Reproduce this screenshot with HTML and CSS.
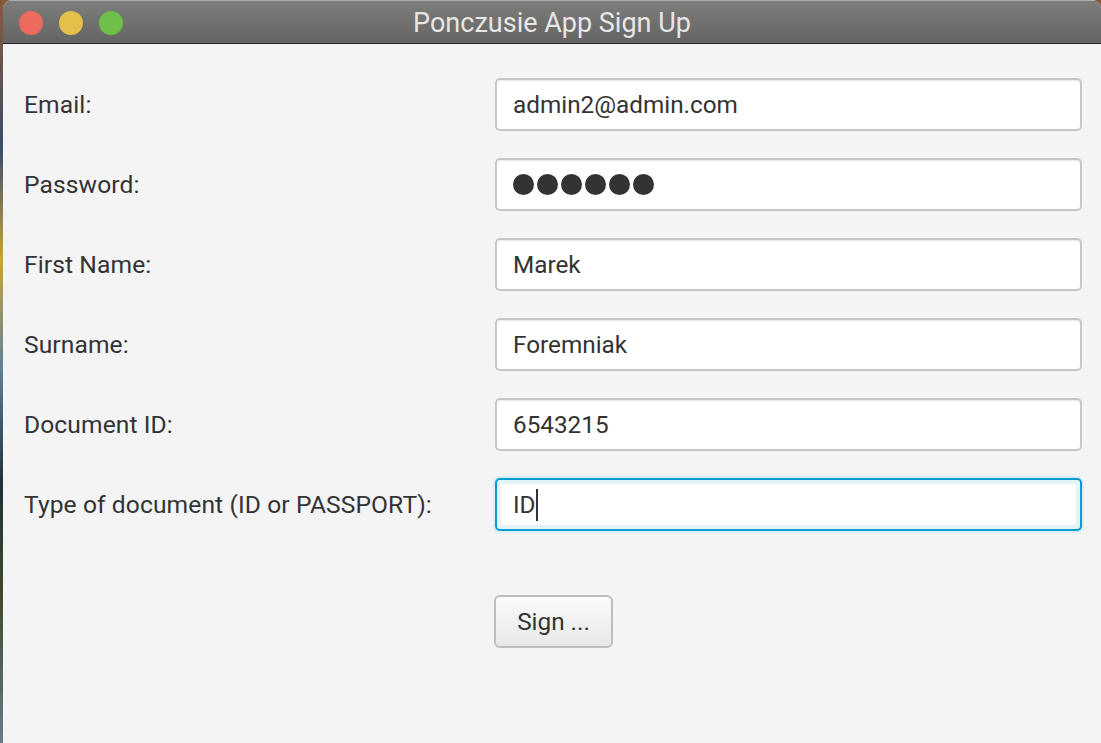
FILE: index.html
```html
<!DOCTYPE html>
<html>
<head>
<meta charset="utf-8">
<link rel="stylesheet" href="styles.css">
</head>
<body>
<div class="desktop">
  <div class="window">
    <div class="titlebar">
      <div class="lights">
        <span class="light red"></span>
        <span class="light yellow"></span>
        <span class="light green"></span>
      </div>
      <div class="title">Ponczusie App Sign Up</div>
    </div>
    <div class="content">
      <div class="form">
        <label class="label">Email:</label>
        <div class="field"><span class="value">admin2@admin.com</span></div>
        <label class="label">Password:</label>
        <div class="field"><span class="dots"><i></i><i></i><i></i><i></i><i></i><i></i></span></div>
        <label class="label">First Name:</label>
        <div class="field"><span class="value">Marek</span></div>
        <label class="label">Surname:</label>
        <div class="field"><span class="value">Foremniak</span></div>
        <label class="label">Document ID:</label>
        <div class="field"><span class="value">6543215</span></div>
        <label class="label">Type of document (ID or PASSPORT):</label>
        <div class="field focused"><span class="value">ID</span><span class="caret"></span></div>
      </div>
      <div class="actions">
        <button class="btn">Sign ...</button>
      </div>
    </div>
  </div>
</div>
</body>
</html>
```
FILE: styles.css
```css
html, body {
  margin: 0;
  padding: 0;
  width: 1101px;
  height: 743px;
  overflow: hidden;
}
.desktop {
  width: 1101px;
  height: 743px;
  background: linear-gradient(180deg, #8a5a3a 0%, #3b4d6a 20%, #c9a43a 35%, #5b7f9a 50%, #20303a 65%, #3d4a2a 80%, #6a7a8a 100%);
  display: flex;
  padding-left: 3px;
  box-sizing: border-box;
}
.window {
  flex: 1;
  height: 743px;
  display: flex;
  flex-direction: column;
  border-radius: 9px 9px 0 0;
  overflow: hidden;
  background: #f4f4f4;
}
.titlebar {
  background: linear-gradient(180deg, #7d7d7b 0%, #646462 100%);
  border-top: 1px solid #aaaaa8;
  border-bottom: 1px solid #262626;
  box-sizing: border-box;
  height: 44px;
  flex: 0 0 44px;
  position: relative;
  display: flex;
  align-items: center;
  justify-content: center;
}
.lights {
  position: absolute;
  left: 16px;
  top: 10px;
  display: flex;
  gap: 16px;
}
.light {
  width: 24px;
  height: 24px;
  border-radius: 50%;
  display: block;
}
.red { background: #ec6a5e; }
.yellow { background: #e2c04a; }
.green { background: #6cc04a; }
.title {
  font-family: Roboto, "Liberation Sans", sans-serif;
  font-size: 27px;
  color: #e6e6e6;
  padding-top: 1px;
}
.content {
  flex: 1;
  padding: 34px 15px 0 21px;
  font-family: Roboto, "Liberation Sans", sans-serif;
  color: #333333;
}
.form {
  display: grid;
  grid-template-columns: 471px 587px;
  row-gap: 27px;
  align-items: center;
}
.label {
  font-size: 24.6px;
  letter-spacing: 0.1px;
  color: #333;
}
.field {
  height: 53px;
  box-sizing: border-box;
  border: 2px solid #c6c6c6;
  border-radius: 5px;
  background: #fff;
  box-shadow: inset 0 2px 2px -1px #e6e6e6;
  display: flex;
  align-items: center;
  padding-left: 16px;
}
.value {
  font-size: 24.3px;
  color: #333;
}
.dots {
  display: flex;
  gap: 3px;
}
.dots i {
  width: 21px;
  height: 21px;
  border-radius: 50%;
  background: #333;
  display: block;
}
.focused {
  border: 2px solid #0a9ad0;
  box-shadow: 0 0 0 2px #d6eef8, inset 0 0 0 4px #e3f3fa;
}
.caret {
  width: 2px;
  height: 32px;
  background: #333;
}
.actions {
  display: flex;
  padding-left: 470px;
  margin-top: 64px;
}
.btn {
  width: 119px;
  height: 53px;
  box-sizing: border-box;
  border: 2px solid #bdbdbd;
  border-radius: 6px;
  background: linear-gradient(180deg, #fbfbfb 0%, #e8e8e8 100%);
  font-family: Roboto, "Liberation Sans", sans-serif;
  font-size: 24.3px;
  color: #333;
  padding: 0;
}
```
